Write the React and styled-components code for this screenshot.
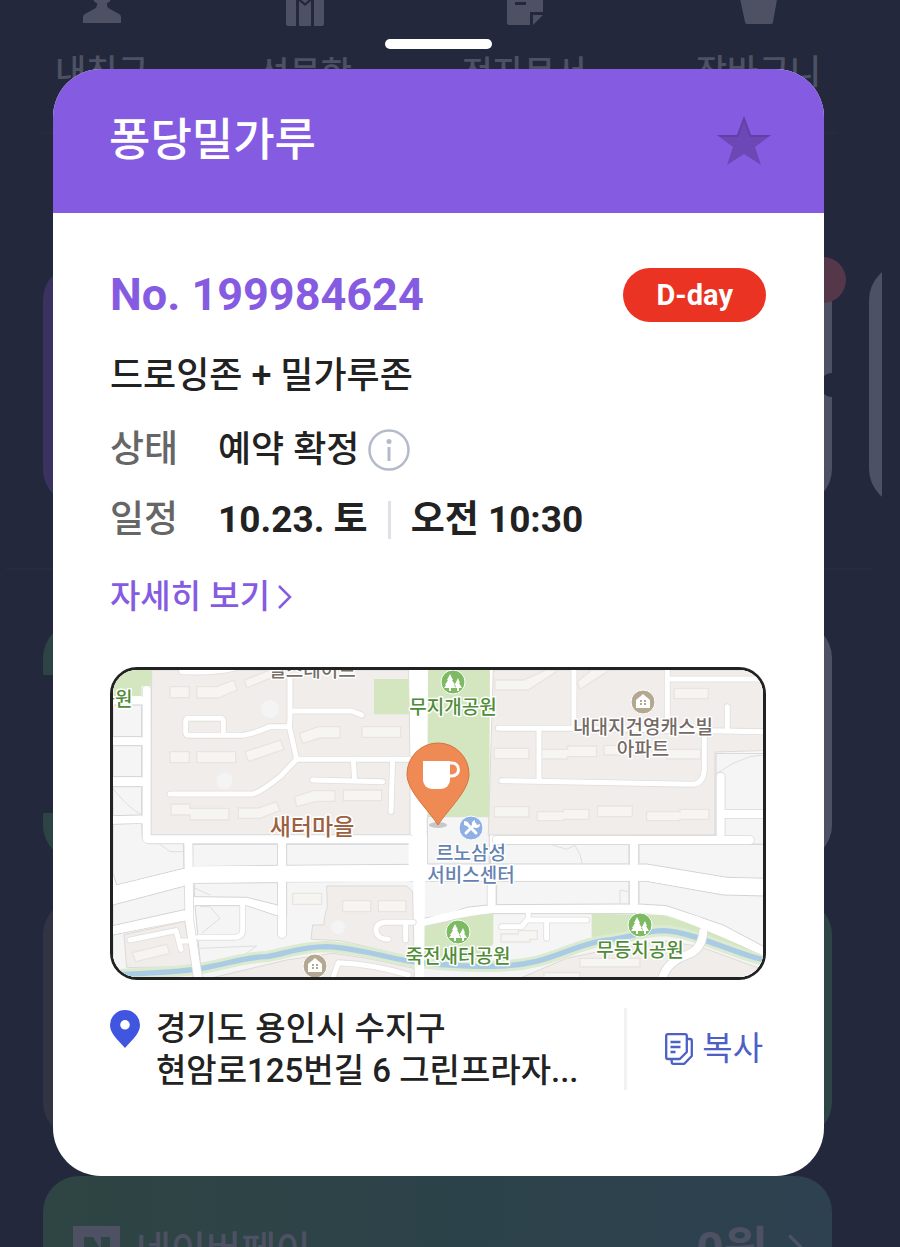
import React, { useState } from 'react'
import styled, { createGlobalStyle } from 'styled-components'

const colors = {
  backdrop: '#23283c',
  faded: '#4d5163',
  purple: '#855ce1',
  ink: '#222222',
  label: '#666666',
  red: '#ea3323',
  blue: '#4056e0',
  copy: '#4c60c6'
}

const GlobalStyle = createGlobalStyle`
  * {
    box-sizing: border-box;
  }

  body {
    margin: 0;
    background: ${colors.backdrop};
    font-family: Roboto, 'Noto Sans CJK KR', sans-serif;
    color: ${colors.ink};
  }

  a {
    color: inherit;
    text-decoration: none;
  }

  button {
    border: 0;
    padding: 0;
    background: none;
    font: inherit;
    color: inherit;
    cursor: pointer;
  }

  svg {
    display: block;
    flex: none;
  }
`

const Screen = styled.div`
  position: relative;
  min-height: 100vh;
  overflow: hidden;
`

/* page behind the dialog */

const Backdrop = styled.div`
  position: absolute;
  inset: 0;
  overflow: hidden;
  color: ${colors.faded};
`

const QuickNav = styled.nav`
  display: flex;
  justify-content: space-between;
  margin: -16px 62px 0 40px;
  padding: 0 17px 36px 15px;
  border-bottom: 2px solid #272b3e;
`

const QuickLink = styled.a`
  display: flex;
  flex-direction: column;
  align-items: center;
  gap: 26px;
  font-size: 34px;
  line-height: 44px;
  font-weight: 500;
`

const TicketArea = styled.div`
  position: relative;
`

const Tickets = styled.div`
  display: flex;
  gap: 37px;
  margin: 130px 18px 63px 43px;
  overflow: hidden;
`

const Ticket = styled.div`
  flex: none;
  width: calc(100% - 50px);
  height: 241px;
  border-radius: 36px;
  background: ${({ $plain }) => $plain ? colors.faded : `linear-gradient(90deg, #3b335f 50%, ${colors.faded} 50%)`};
`

const TicketCount = styled.span`
  position: absolute;
  top: -7px;
  right: 54px;
  width: 46px;
  height: 46px;
  border-radius: 50%;
  background: #543849;
`

const TicketNotch = styled.span`
  position: absolute;
  top: 109px;
  right: 56px;
  width: 24px;
  height: 24px;
  border-radius: 50%;
  background: ${colors.backdrop};
`

const Rule = styled.div`
  height: 2px;
  margin: 0 28px 52px 6px;
  background: #272b3e;
`

const Passes = styled.div`
  display: flex;
  flex-direction: column;
  gap: 38px;
  margin: 0 68px 0 43px;
`

const Pass = styled.div`
  height: 239px;
  border-radius: 36px;
  background: ${({ $fill }) => $fill};
`

const PayPass = styled(Pass)`
  display: flex;
  align-items: flex-start;
  padding: 50px 28px 0 30px;
  font-size: 38px;
  line-height: 48px;
  font-weight: 500;
`

const PayName = styled.span`
  flex: 1;
  margin-left: 16px;
`

const PayAmount = styled.span`
  margin-right: 20px;
  font-size: 48px;
  font-weight: 700;
`

/* dialog */

const Layer = styled.div`
  position: relative;
  display: flex;
  flex-direction: column;
  align-items: center;
  padding: 39px 76px 71px 53px;
`

const Handle = styled.button`
  width: 107px;
  height: 10px;
  margin-bottom: 20px;
  border-radius: 5px;
  background: #ffffff;
`

const Sheet = styled.section`
  width: 100%;
  border-radius: 48px;
  overflow: hidden;
  background: #ffffff;
`

const SheetHeader = styled.header`
  display: flex;
  align-items: center;
  justify-content: space-between;
  height: 144px;
  padding: 0 53px 0 56px;
  background: ${colors.purple};
  color: #ffffff;
`

const ShopName = styled.h1`
  margin: 0;
  font-size: 45px;
  line-height: 54px;
  font-weight: 500;
`

const SheetBody = styled.div`
  padding: 55px 58px 84px 57px;
`

const Row = styled.div`
  display: flex;
  align-items: center;
  margin-bottom: ${({ $gap }) => $gap}px;
  font-size: 36px;
  line-height: 54px;
  font-weight: 500;
`

const TicketNumber = styled.h2`
  flex: 1;
  margin: 0;
  font-size: 45px;
  font-weight: 700;
  color: ${colors.purple};
`

const DayBadge = styled.span`
  padding: 0 33px;
  border-radius: 27px;
  background: ${colors.red};
  color: #ffffff;
  font-size: 29px;
  font-weight: 700;
`

const Label = styled.span`
  width: 108px;
  font-size: 37px;
  color: ${colors.label};
`

const Strong = styled.span`
  font-size: 37px;
  font-weight: 700;
`

const InfoButton = styled.button`
  margin-left: 9px;
`

const Bar = styled.span`
  width: 3px;
  height: 38px;
  margin: 0 20px;
  background: #e0e0e6;
`

const DetailLink = styled.a`
  display: flex;
  align-items: center;
  gap: 8px;
  font-size: 33px;
  color: ${colors.purple};
`

const MapFrame = styled.div`
  margin-bottom: 28px;
  border: 3px solid ${colors.ink};
  border-radius: 27px;
  overflow: hidden;

  svg {
    width: 100%;
    height: auto;
  }

  text {
    font-family: 'Noto Sans CJK KR', sans-serif;
    font-size: 19px;
    font-weight: 500;
    text-anchor: middle;
    paint-order: stroke;
    stroke: #ffffff;
    stroke-width: 3px;
    stroke-linejoin: round;
  }
`

const VillageText = styled.text`
  && {
    font-size: 23px;
    fill: #9c6141;
  }
`

const AddressRow = styled.div`
  display: flex;
  align-items: flex-start;
`

const Address = styled.address`
  flex: 1;
  min-width: 0;
  margin-left: 16px;
  font-size: 33px;
  line-height: 42px;
  font-style: normal;
  font-weight: 500;
`

const AddressLine = styled.div`
  overflow: hidden;
  white-space: nowrap;
  text-overflow: ellipsis;
`

const CopyButton = styled.button`
  display: flex;
  align-items: center;
  gap: 9px;
  margin-left: 32px;
  padding: 18px 3px 18px 38px;
  border-left: 3px solid #f2f2f2;
  color: ${colors.copy};
  font-size: 33px;
  line-height: 46px;
`

const PersonIcon = () => (
  <svg width="40" height="40" viewBox="0 0 40 40" fill="currentColor">
    <circle cx="20" cy="11" r="10" />
    <path d="M15 20h10c0 3 1 4 3 5l9 5q2 1 2 3v6H1v-6q0-2 2-3l9-5c2-1 3-2 3-5z" />
  </svg>
)

const GiftIcon = () => (
  <svg width="40" height="42" viewBox="0 0 40 42" fill="currentColor">
    <path d="M1 6h10v36H3q-2 0-2-2zM29 6h10v34q0 2-2 2h-8zM14 17l6 5 6-5v25H14zM14 6h12v8l-6 5-6-5z" />
  </svg>
)

const DocumentIcon = () => (
  <svg width="40" height="41" viewBox="0 0 40 41" fill="currentColor">
    <path fillRule="evenodd" d="M3 4h36v24H26v13H5q-2 0-2-2V4zM11 18v3h11v-3z" />
    <path d="M29 31h10l-10 10z" />
  </svg>
)

const BasketIcon = () => (
  <svg width="40" height="40" viewBox="0 0 40 40" fill="currentColor">
    <path d="M1 10h39l-5 28q0 2-2 2H9q-2 0-2-2z" />
  </svg>
)

const StarIcon = () => (
  <svg width="54" height="50" viewBox="0 0 54 50">
    <path d="M27 0l7 19h20L38 31l6 18-17-11-17 11 6-18L0 19h20z" fill="#6c47b6" />
    <path d="M0 19h20l7-19 7 19h20l-3 2H33L27 5l-6 16H3z" fill="#5a3a9c" opacity=".6" />
  </svg>
)

const InfoIcon = () => (
  <svg width="42" height="42" viewBox="0 0 42 42" fill="none" stroke="#b5bacb">
    <circle cx="21" cy="21" r="19.5" strokeWidth="2.5" />
    <path d="M21 18v14" strokeWidth="3" />
    <circle cx="21" cy="12.500" r="2.500" fill="#b5bacb" stroke="none" />
  </svg>
)

const Chevron = ({ width = 14, height = 24, stroke = 2.5 }) => (
  <svg width={width} height={height} viewBox="0 0 14 24" fill="none" stroke="currentColor" strokeWidth={stroke}>
    <path d="M1 1l11 11L1 23" />
  </svg>
)

const PinIcon = () => (
  <svg width="30" height="40" viewBox="0 -2 30 40">
    <path fillRule="evenodd" fill={colors.blue} d="M15 0a15 15 0 0 1 15 15c0 8-7 14-15 23C7 29 0 23 0 15A15 15 0 0 1 15 0zm0 10a4.800 4.800 0 1 0 0 9.600 4.800 4.800 0 0 0 0-9.600z" />
  </svg>
)

const CopyIcon = () => (
  <svg width="28" height="32" viewBox="0 0 28 32" fill="none" stroke="currentColor" strokeWidth="2.300" strokeLinejoin="round">
    <path d="M3 1.200h17q1.800 0 1.800 1.800v16l-7 7H3q-1.800 0-1.800-1.800V3Q1.200 1.200 3 1.200z" />
    <path d="M22 6h3q1.800 0 1.800 1.800V23l-7.500 7.800H8.500q-1.800 0-1.800-1.800v-3" />
    <path d="M5.500 9h10M5.500 14h10M5.500 19h5" />
  </svg>
)

const TreePoi = ({ x, y }) => (
  <g transform={`translate(${x} ${y})`}>
    <circle r="12" fill="#7dba62" stroke="#ffffff" />
    <path d="M-3-8l3 6h-1l3 5h-1l2 3h-5v3h-2V6h-5l2-3h-1l3-5h-1z" fill="#ffffff" />
    <path d="M5-4l2 5H6l3 5H6v3H4V6H3L2 2z" fill="#ffffff" />
  </g>
)

const HousePoi = ({ x, y }) => (
  <g transform={`translate(${x} ${y})`}>
    <circle r="12" fill="#b5a892" stroke="#ffffff" />
    <path d="M0-8l7 6v8H-7v-8z" fill="#ffffff" />
    <path d="M-3-2h2v2h-2zM1-2h2v2H1zM-3 1h2v2h-2zM1 1h2v2H1z" fill="#b5a892" />
  </g>
)

const blocks = [
  '39,135 125,135 125,230 39,230',
  '39,257 125,257 125,350 39,350',
  '39,380 125,380 125,465 39,467',
  '39,493 125,490 127,532 142,548 250,550 252,625 50,675 39,640',
  '278,553 533,553 533,616 278,620',
  '560,553 930,553 930,613 560,616',
  '283,670 533,668 533,735 440,712 283,710',
  '39,735 255,678 257,748 39,797',
  '39,825 260,780 280,955 39,955',
  '285,737 440,737 533,768 560,768 560,666 943,664 943,955 305,955',
  '982,470 1168,470 1168,612 982,612',
  '1848,280 1992,280 1992,553 1600,553 1600,525 1848,525',
  '1180,553 1587,553 1587,612 1170,612',
  '1617,553 1992,553 1992,655 1880,652 1640,612 1617,612',
  '1190,664 1587,664 1587,732 1190,734',
  '1617,664 1640,664 1870,705 1992,708 1992,860 1870,795 1700,737 1617,732',
  '970,664 1163,664 1163,735 1100,742 1040,765 970,775',
  '970,800 1040,785 1110,765 1180,761 1690,761 1800,800 1992,890 1992,955 970,955'
]

const estates = [
  '155,30 926,30 930,290 930,525 152,525',
  '1180,30 1992,30 1992,272 1845,276 1845,525 1165,525',
  '72,824 255,784 278,920 80,923',
  '680,678 920,678 938,695 943,895 800,860 720,842 633,838 638,795 672,795 674,770 682,740',
  '330,955 560,900 700,880 800,895 943,925 943,955',
  '1260,955 1400,895 1510,872 1690,842 1800,860 1992,930 1992,955'
]

const parks = [
  '39,30 155,30 152,80 125,78 125,108 39,108',
  '822,57 926,57 928,163 822,163',
  '984,30 1170,30 1168,470 982,470',
  '970,800 1040,785 1110,765 1180,761 1180,850 1150,900 970,900',
  '1475,761 1690,765 1800,800 1992,890 1992,915 1690,812 1475,832'
]

const buildings = [
  '210,80 268,80 268,113 210,113',
  '290,80 350,80 402,60 412,90 355,114 290,114',
  '433,60 510,30 545,40 440,84',
  '210,275 268,275 268,308 210,308',
  '290,275 407,275 407,308 290,308',
  '435,275 542,240 552,268 445,305',
  '598,220 655,200 720,200 720,234 662,234 608,250',
  '786,200 902,200 902,232 786,232',
  '213,432 270,432 270,445 387,445 387,480 270,480 270,465 213,465',
  '415,444 475,444 530,425 540,452 480,475 415,475',
  '583,410 640,392 705,392 705,424 650,424 590,440',
  '730,390 845,390 845,422 730,422',
  '1185,60 1270,60 1340,30 1375,32 1285,90 1185,90',
  '1432,65 1475,30 1530,30 1440,88',
  '1723,85 1825,85 1825,116 1723,116',
  '1183,265 1287,265 1287,296 1183,296',
  '1318,268 1403,268 1403,258 1490,258 1490,290 1403,290 1403,297 1318,297',
  '1512,256 1570,256 1570,285 1512,285',
  '1700,268 1802,268 1802,297 1700,297',
  '1183,440 1287,440 1287,471 1183,471',
  '1312,455 1390,455 1390,448 1467,448 1467,478 1390,478 1390,482 1312,482',
  '1493,438 1597,438 1597,470 1493,470',
  '1640,455 1740,455 1740,448 1827,448 1827,478 1740,478 1740,482 1640,482',
  '578,700 665,700 665,733 578,733',
  '728,722 812,722 812,755 728,755',
  '835,722 918,722 918,755 835,755',
  '97,878 200,853 210,880 107,905',
  '1203,822 1255,822 1255,812 1312,812 1312,838 1290,838 1290,846 1203,846',
  '1440,895 1620,895 1620,921 1440,921',
  '1332,938 1440,938 1440,960 1332,960'
]

const lanes = [
  'M245 35Q340 40 400 25',
  'M570 50V175L568 200L590 298H930',
  'M575 153H755L785 165',
  'M568 200H510Q450 226 420 226H265Q257 225 257 215V185Q257 175 267 175H360Q370 175 370 185V225',
  'M590 298L540 350Q475 402 455 402H210',
  'M760 298L764 360M638 360L848 365M878 298L873 455',
  'M1422 30V205M1195 205H1420L1992 215M1317 205V360',
  'M1205 362L1780 373Q1810 370 1813 330V215',
  'M1702 30V212M1702 57H1992M1882 140V212',
  'M428 735V810Q428 832 400 832H295',
  'M90 840L228 812L243 868M240 843H270',
  'M940 787H855Q825 790 828 815Q835 838 865 838M917 790V840',
  'M697 960L715 908Q820 912 925 945',
  'M1205 800H1265L1285 775V755M1285 780H1460M1340 780V835'
]

const streets = [
  'M140 90V530Q140 538 150 538H930',
  'M265 540L268 780L295 960',
  'M546 540V822',
  'M1862 350V540M1862 462H1992M1190 540H1950',
  'M1602 540V745',
  'M1175 670V745',
  'M1810 815Q1806 870 1760 885Q1700 905 1685 960'
]

const river = 'M39 945C150 940 240 936 300 926C400 908 430 892 500 890C560 880 600 860 680 860C760 862 850 890 920 902C1000 915 1130 922 1200 918C1350 915 1400 860 1510 842C1590 832 1640 812 1690 812C1780 815 1900 880 1992 900'

function StoreMap() {
  return (
    <svg viewBox="0 0 650 307" role="img" aria-label="매장 위치">
      <g transform="translate(-13 -10) scale(.3333)">
        <path d="M0 0h2000v1000H0z" fill="#ffffff" />
        {blocks.map(p => <polygon key={p} points={p} fill="#f5f5f5" stroke="#d3d3d3" strokeWidth="3" />)}
        {estates.map(p => <polygon key={p} points={p} fill="#f0edeb" stroke="#ddd9d6" strokeWidth="3" />)}
        {parks.map(p => <polygon key={p} points={p} fill="#d3e6bf" />)}
        <g fill="#f6f5f1" stroke="#e8e5e1" strokeWidth="4">
          {buildings.map(p => <polygon key={p} points={p} />)}
        </g>
        <g fill="#f5f4f4">
          <circle cx="510" cy="147" r="27" />
          <circle cx="373" cy="363" r="24" />
          <circle cx="714" cy="802" r="21" />
        </g>
        <g fill="none" stroke="#dedede" strokeWidth="3">
          <path d="M39 385Q80 440 125 465M175 550L210 575H250M285 685L330 705M300 740L330 740L360 775L305 820M300 865L470 858L440 880L320 925M1350 553L1400 568L1425 556Q1445 585 1447 612M1560 730V690L1585 695" />
          <path d="M1850 340L1900 310L1950 290L1992 285" />
        </g>
        <g fill="none">
          <path d={river} stroke="#dcead0" strokeWidth="34" />
          <path d={river} stroke="#a9cbe3" strokeWidth="16" />
        </g>
        <path d="M928 30H982L972 960H945z" fill="#ffffff" />
        <g fill="none" strokeLinecap="round" strokeLinejoin="round">
          {lanes.map(d => <path key={d} d={d} stroke="#e2dfdc" strokeWidth="20" />)}
          {streets.map(d => <path key={d} d={d} stroke="#dadada" strokeWidth="29" />)}
          {lanes.map(d => <path key={d} d={d} stroke="#ffffff" strokeWidth="15" />)}
          {streets.map(d => <path key={d} d={d} stroke="#ffffff" strokeWidth="24" />)}
        </g>
        <path d="M39 679L252 627L283 619L930 616V665L560 665L283 668L255 676L39 733zM926 527H981V664H926zM926 290H940V306H926zM970 615H1640L1880 654L1992 657V705L1870 702L1640 662H970zM39 799L265 750V780L39 823zM39 111H140V132H39zM39 233H140V254H39zM39 353H140V377H39zM39 469H140V490H39z" fill="#ffffff" />
        <path d="M970 778Q1080 744 1165 738L1617 735Q1690 735 1800 772L1992 863V887Q1800 800 1700 766L1617 758H1180Q1080 770 970 797z" fill="#ffffff" />
        <path d="M283 713L440 715L533 738V766L440 735L283 734z" fill="#ffffff" />
      </g>

      <text x="199" y="7" fill="#777169">힐스테이트</text>
      <text x="2" y="36" fill="#508c38">공원</text>
      <TreePoi x="340" y="12" />
      <text x="340" y="44" fill="#508c38">무지개공원</text>
      <HousePoi x="530" y="32" />
      <text x="530" y="64" fill="#756b66">내대지건영캐스빌</text>
      <text x="530" y="86" fill="#756b66">아파트</text>
      <VillageText x="199" y="165">새터마을</VillageText>
      <g transform="translate(358 158)">
        <circle r="12" fill="#8fb0e2" stroke="#ffffff" />
        <path d="M-5-5l10 10M4-4l-9 9" stroke="#ffffff" strokeWidth="3" strokeLinecap="round" fill="none" />
        <path d="M4-8a4 4 0 0 0-3 5q1 3 4 3a4 4 0 0 0 4-4l-3 1-2-2z" fill="#ffffff" />
        <path d="M-7-7l4 1 1 3-2 1-3-1z" fill="#ffffff" />
      </g>
      <text x="358" y="190" fill="#6583b0">르노삼성</text>
      <text x="358" y="212" fill="#6583b0">서비스센터</text>
      <TreePoi x="345" y="262" />
      <text x="345" y="293" fill="#508c38">죽전새터공원</text>
      <TreePoi x="527" y="255" />
      <text x="527" y="287" fill="#508c38">무등치공원</text>
      <HousePoi x="202" y="296" />

      <ellipse cx="325" cy="155" rx="9" ry="3" fill="#999999" opacity=".5" />
      <path d="M325 155C314 138 294 121 294 104a31 31 0 0 1 62 0c0 17-20 34-31 51z" fill="#ef8a55" stroke="#d5743f" />
      <path d="M310 91h27v19a9 9 0 0 1-9 9h-9a9 9 0 0 1-9-9z" fill="#ffffff" />
      <path d="M336 93h3a6 6 0 0 1 0 13h-3" fill="none" stroke="#ffffff" strokeWidth="3" />
    </svg>
  )
}

const menus = [
  { name: '내친구', icon: <PersonIcon /> },
  { name: '선물함', icon: <GiftIcon /> },
  { name: '전자문서', icon: <DocumentIcon /> },
  { name: '장바구니', icon: <BasketIcon /> }
]

function Home() {
  return (
    <Backdrop>
      <QuickNav>
        {menus.map(menu => (
          <QuickLink key={menu.name} href="#">
            {menu.icon}
            {menu.name}
          </QuickLink>
        ))}
      </QuickNav>
      <TicketArea>
        <Tickets>
          <Ticket />
          <Ticket $plain />
        </Tickets>
        <TicketNotch />
        <TicketCount />
      </TicketArea>
      <Rule />
      <Passes>
        <Pass $fill={`linear-gradient(90deg, transparent 50%, ${colors.faded} 50%), linear-gradient(#2d4445 53px, transparent 53px 191px, #2d4445 191px)`} />
        <Pass $fill="linear-gradient(90deg, #323444, #2e4545)" />
        <PayPass $fill="linear-gradient(90deg, #2f4543, #2c4249 50%, #2d4150)">
          <svg width="47" height="48" viewBox="0 0 47 48">
            <path fillRule="evenodd" fill="currentColor" d="M0 0h47v48H0zM11 11v26h9V24l9 13h8V11h-9v13l-8-13z" />
          </svg>
          <PayName>네이버페이</PayName>
          <PayAmount>0원</PayAmount>
          <Chevron width={16} height={44} stroke={3} />
        </PayPass>
      </Passes>
    </Backdrop>
  )
}

function App() {
  const [favorite, setFavorite] = useState(false)

  return (
    <Screen>
      <GlobalStyle />
      <Home />
      <Layer>
        <Handle type="button" aria-label="닫기" />
        <Sheet>
          <SheetHeader>
            <ShopName>퐁당밀가루</ShopName>
            <button type="button" aria-label="즐겨찾기" aria-pressed={favorite} onClick={() => setFavorite(!favorite)}>
              <StarIcon />
            </button>
          </SheetHeader>
          <SheetBody>
            <Row $gap={27}>
              <TicketNumber>No. 199984624</TicketNumber>
              <DayBadge>D-day</DayBadge>
            </Row>
            <Row $gap={20}>드로잉존 + 밀가루존</Row>
            <Row $gap={16}>
              <Label>상태</Label>
              예약 확정
              <InfoButton type="button" aria-label="상태 안내">
                <InfoIcon />
              </InfoButton>
            </Row>
            <Row $gap={23}>
              <Label>일정</Label>
              <Strong>10.23. 토</Strong>
              <Bar />
              <Strong>오전 10:30</Strong>
            </Row>
            <Row $gap={43}>
              <DetailLink href="#">
                자세히 보기
                <Chevron />
              </DetailLink>
            </Row>
            <MapFrame>
              <StoreMap />
            </MapFrame>
            <AddressRow>
              <PinIcon />
              <Address>
                <AddressLine>경기도 용인시 수지구</AddressLine>
                <AddressLine>현암로125번길 6 그린프라자...</AddressLine>
              </Address>
              <CopyButton type="button">
                <CopyIcon />
                복사
              </CopyButton>
            </AddressRow>
          </SheetBody>
        </Sheet>
      </Layer>
    </Screen>
  )
}

export default App
